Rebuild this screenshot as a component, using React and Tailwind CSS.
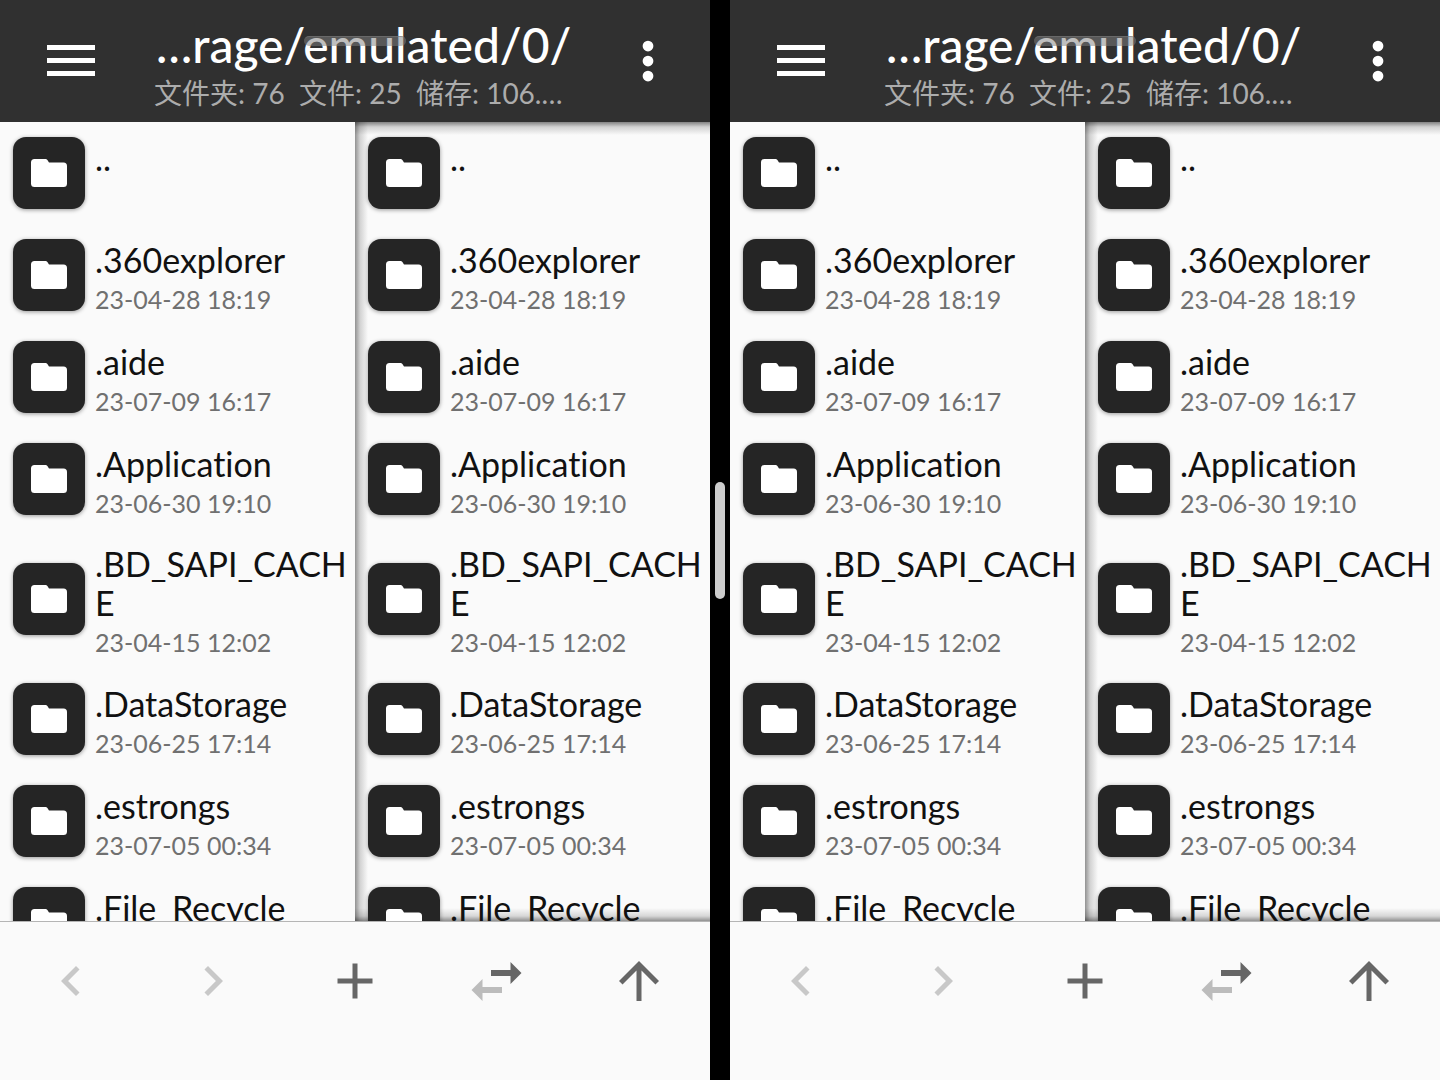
import React from "react";

const entries = [
  { name: "..", date: "" },
  { name: ".360explorer", date: "23-04-28 18:19" },
  { name: ".aide", date: "23-07-09 16:17" },
  { name: ".Application", date: "23-06-30 19:10" },
  { name: ".BD_SAPI_CACHE", date: "23-04-15 12:02" },
  { name: ".DataStorage", date: "23-06-25 17:14" },
  { name: ".estrongs", date: "23-07-05 00:34" },
  { name: ".File_Recycle", date: "" },
];

function FolderIcon() {
  return (
    <span className="flex size-[72px] shrink-0 items-center justify-center rounded-[13px] bg-[#252525] shadow-[0_1px_4px_rgba(0,0,0,0.4)]">
      <svg viewBox="0 0 36 28" className="h-7 w-9 fill-white" aria-hidden="true">
        <path d="M3.5 0H14.5Q15.7 0 16.4 1L18 3.4H32.5Q36 3.4 36 6.9V24.5Q36 28 32.5 28H3.5Q0 28 0 24.5V3.5Q0 0 3.5 0Z" />
      </svg>
    </span>
  );
}

function FileList({ shaded }) {
  return (
    <ul
      className={
        shaded
          ? "min-w-0 flex-1 overflow-hidden bg-[#fafafa] bg-[linear-gradient(to_right,rgba(0,0,0,0.42),rgba(0,0,0,0.16)_5px,transparent_13px),linear-gradient(to_bottom,rgba(0,0,0,0.48),rgba(0,0,0,0.16)_5px,transparent_13px),linear-gradient(to_top,rgba(0,0,0,0.42),rgba(0,0,0,0.14)_5px,transparent_13px)]"
          : "min-w-0 flex-1 overflow-hidden bg-[#fafafa]"
      }
    >
      {entries.map((e) => (
        <li key={e.name}>
          <button
            type="button"
            className="flex min-h-[102px] w-full items-center gap-[10px] py-[14px] pr-1 pl-[13px] text-left"
          >
            <FolderIcon />
            <span className="min-w-0 flex-1">
              <span className="block text-[34px] leading-[39px] break-all text-[#111]">{e.name}</span>
              <span className="block h-8 text-[25px] leading-10 whitespace-nowrap text-[#707070]">{e.date}</span>
            </span>
          </button>
        </li>
      ))}
    </ul>
  );
}

function ToolButton({ label, color, children }) {
  return (
    <button type="button" aria-label={label} className="flex flex-1 items-center justify-center">
      <svg viewBox="0 0 24 24" className={`size-[60px] fill-current ${color}`} aria-hidden="true">
        {children}
      </svg>
    </button>
  );
}

function Pane() {
  return (
    <section className="flex min-w-0 flex-1 flex-col overflow-hidden bg-[#fafafa]">
      <header className="relative flex h-[122px] shrink-0 items-center bg-[#303030] pr-8 pl-[47px]">
        <button type="button" aria-label="菜单" className="shrink-0">
          <svg viewBox="0 0 48 32" className="h-8 w-12 fill-white" aria-hidden="true">
            <path d="M0 0H48V5H0ZM0 13H48V18H0ZM0 26H48V31H0Z" />
          </svg>
        </button>
        <div className="min-w-0 flex-1 pt-2 pl-[59px] whitespace-nowrap">
          <h1 className="pl-0.5 text-[48px] leading-[56px] font-medium text-white">…rage/emulated/0/</h1>
          <p className="text-[28px] leading-10 whitespace-pre text-[#acacac]">文件夹: 76  文件: 25  储存: 106.…</p>
        </div>
        <button type="button" aria-label="更多" className="shrink-0">
          <svg viewBox="0 0 24 24" className="size-[60px] fill-white" aria-hidden="true">
            <circle cx="12" cy="6" r="2.15" />
            <circle cx="12" cy="12" r="2.15" />
            <circle cx="12" cy="18" r="2.15" />
          </svg>
        </button>
        <span className="absolute top-9 left-1/2 h-[10px] w-[102px] -translate-x-1/2 rounded-full border-t border-[#777]/60 bg-[#808080]/50" />
      </header>
      <div className="flex min-h-0 flex-1">
        <FileList />
        <FileList shaded />
      </div>
      <nav className="h-[159px] shrink-0 border-t border-[#b5b5b5] bg-[#fafafa]">
        <div className="flex h-[117px]">
          <ToolButton label="后退" color="text-[#c8c8c8]">
            <path d="M15.41 7.41 14 6l-6 6 6 6 1.41-1.41L10.83 12z" />
          </ToolButton>
          <ToolButton label="前进" color="text-[#c8c8c8]">
            <path d="M10 6 8.59 7.41 13.17 12l-4.58 4.59L10 18l6-6z" />
          </ToolButton>
          <ToolButton label="新建" color="text-[#666]">
            <path d="M19 13h-6v6h-2v-6H5v-2h6V5h2v6h6v2z" />
          </ToolButton>
          <ToolButton label="切换" color="text-[#666]">
            <path d="M9.6 7.6H17.4V4.4L21.8 8.8 17.4 13.2V10H9.6Z" />
            <path className="fill-[#bcbcbc]" d="M14 14.4H6.2V11.2L1.8 15.6 6.2 20V16.8H14Z" />
          </ToolButton>
          <ToolButton label="上级" color="text-[#666]">
            <path d="m4 12 1.41 1.41L11 7.83V20h2V7.83l5.58 5.59L20 12l-8-8-8 8z" />
          </ToolButton>
        </div>
      </nav>
    </section>
  );
}

export default function App() {
  return (
    <main className="flex h-screen w-full overflow-hidden bg-black font-[Lato,'Noto_Sans_CJK_SC',sans-serif] [font-variant-ligatures:none]">
      <Pane />
      <div className="flex w-5 shrink-0 items-center justify-center">
        <span className="h-[117px] w-[10px] rounded-full bg-[#ccc]" />
      </div>
      <Pane />
    </main>
  );
}
